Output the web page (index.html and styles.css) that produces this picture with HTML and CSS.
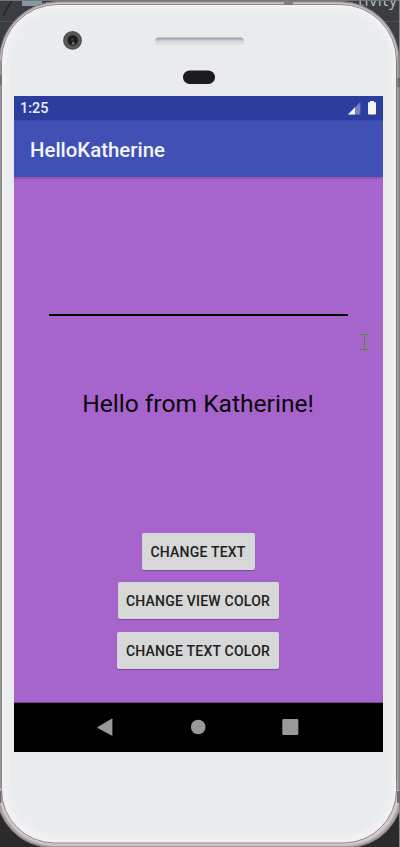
FILE: index.html
```html
<!DOCTYPE html>
<html lang="en">
<head>
<meta charset="utf-8">
<title>HelloKatherine</title>
<link rel="stylesheet" href="styles.css">
</head>
<body>
<div class="stage">
  <svg class="frame" width="400" height="847" viewBox="0 0 400 847" aria-hidden="true">
    <defs>
      <linearGradient id="slot" x1="0" y1="0" x2="0" y2="1">
        <stop offset="0" stop-color="#9a9fa9"/><stop offset=".3" stop-color="#b5bac3"/>
        <stop offset=".45" stop-color="#d4d7de"/><stop offset="1" stop-color="#e3e5e9"/>
      </linearGradient>
      <filter id="soft" x="-5%" y="-5%" width="110%" height="110%"><feGaussianBlur stdDeviation="2"/></filter>
    </defs>
    <rect width="400" height="847" fill="#2b2b2b"/>
    <rect width="400" height="90" fill="#3a3e40"/>
    <path d="M0 21.5H400" stroke="#4b4f51"/>
    <path d="M3 16L12 0" stroke="#242729" stroke-width="1.5"/>
    <rect x="22" width="20" height="6" fill="#8497a3"/>
    <text class="backdrop-text" x="358" y="6">tivity</text>
    <rect width="400" height="1" fill="#777"/>
    <path d="M-.5 60A59 58.5 0 0 1 58.5 1.5H340A59 58.5 0 0 1 399 60V790H403A55 57 0 0 1 348 847.5H52A56 57 0 0 1 -4 790H-.5Z" fill="#aaa0a3" stroke="#877f82"/>
    <path d="M.5 61A58 58 0 0 1 58.5 3H340A58 58 0 0 1 398 61V790H400A54 55 0 0 1 346 845.5H54A55 55 0 0 1 -1 790H.5Z" fill="#d3c9ce" stroke="#c6bdc1"/>
    <path d="M1.5 60.5A56 56 0 0 1 57.5 4.5H340.5A56 56 0 0 1 396.5 60.5V790A53 53 0 0 1 343.5 843H54.5A53 53 0 0 1 1.5 790Z" fill="#f1f1f4" stroke="#8f888b"/>
    <rect x="8" y="11" width="383" height="825" rx="50" fill="#e9ebed" filter="url(#soft)"/>
    <path d="M398.5 55V790" stroke="#918d8d" stroke-width="2"/>
    <path d="M396.5 60V780" stroke="#777" stroke-width="1"/>
    <path d="M399.5 0V847" stroke="#858585"/>
    <path d="M.5 60V788" stroke="#9c9397"/>
    <rect x="284" y="2" width="9" height="3" fill="#837c7f"/>
    <path d="M0 75V85M0 791V803M399 78V87M398.5 791V803" stroke="#706b6e" stroke-width="3"/>
    <circle cx="72.5" cy="40.4" r="9.4" fill="#505052"/>
    <circle cx="72.5" cy="40.4" r="7.3" fill="none" stroke="#626264"/>
    <circle cx="72.7" cy="40.4" r="5" fill="#19191c"/>
    <circle cx="72.5" cy="39.5" r="1.7" fill="#33364a"/>
    <circle cx="73.3" cy="43.3" r="1.5" fill="#77713a"/>
    <rect x="155" y="37.5" width="89" height="8" rx="3.5" fill="url(#slot)"/>
    <rect x="183" y="70.5" width="32" height="13.5" rx="6.7" fill="#1c1c20"/>
  </svg>

  <main class="screen">
    <div class="status">
      <span>1:25</span>
      <svg class="status-icons" width="29" height="14" viewBox="0 0 29 14" aria-hidden="true">
        <path d="M0 13.4L12.3 1V13.4Z" fill="#7881c1"/>
        <path d="M0 13.4L7 6.3V13.4Z" fill="#f2f2fa"/>
        <path d="M20 1.8Q20 1.2 20.7 1.2H22V0H26V1.2H27.3Q28 1.2 28 1.8V12.7Q28 13.4 27.3 13.4H20.7Q20 13.4 20 12.7Z" fill="#f2f2fa"/>
      </svg>
    </div>
    <header class="appbar"><h1>HelloKatherine</h1></header>
    <section class="content">
      <div class="field"></div>
      <p class="greeting">Hello from Katherine!</p>
      <div class="buttons">
        <button class="b-text">CHANGE TEXT</button>
        <button class="b-view">CHANGE VIEW COLOR</button>
        <button class="b-color">CHANGE TEXT COLOR</button>
      </div>
      <svg class="cursor" width="9" height="17" viewBox="0 0 9 17" aria-hidden="true">
        <path d="M0 .5H9M0 15.5H9M4.5 0V16" fill="none" stroke="#4a9128"/>
      </svg>
    </section>
    <nav class="navbar">
      <svg width="369" height="49" viewBox="0 0 369 49" aria-hidden="true">
        <g fill="#999">
          <path d="M98.4 16.2V32.2Q98.4 33 97.6 32.6L83.6 24.9Q83 24.4 83.6 23.9L97.6 15.8Q98.4 15.5 98.4 16.2Z"/>
          <circle cx="184.2" cy="24" r="7.3"/>
          <rect x="268.3" y="16" width="16" height="16" rx="1"/>
        </g>
      </svg>
    </nav>
  </main>
</div>
</body>
</html>
```
FILE: styles.css
```css
* { box-sizing: border-box; }
body {
  margin: 0;
  font-family: Roboto, "Liberation Sans", sans-serif;
  overflow: hidden;
}
.stage {
  position: relative;
  width: 400px;
  height: 847px;
  padding: 96px 17px 95px 14px;
}
.frame { position: absolute; inset: 0; }
.backdrop-text {
  font: 16px "Open Sans", sans-serif;
  letter-spacing: .7px;
  fill: #b7bcc0;
}
.screen {
  position: relative;
  display: flex;
  flex-direction: column;
  height: 656px;
  background: #000;
}
.status {
  display: flex;
  justify-content: space-between;
  align-items: center;
  height: 24px;
  padding: 0 6px;
  background: #2c3e9d;
  color: #eef0fa;
  font-size: 14.4px;
  font-weight: 500;
}
.appbar {
  display: flex;
  align-items: center;
  height: 57px;
  padding: 2px 16px 0;
  background: #4050b4;
  border-top: 1px solid #384aac;
}
h1 {
  margin: 0;
  color: #f3f4fb;
  font-size: 20.4px;
  font-weight: 500;
}
.content {
  display: flex;
  flex-direction: column;
  align-items: center;
  position: relative;
  height: 526px;
  padding-right: 1px;
  background: #a864cd;
  border-bottom: 1px solid #754390;
  box-shadow: inset 0 2px 1px #9258b5;
}
.field {
  width: 299px;
  height: 139px;
  border-bottom: 2px solid #000;
}
.greeting {
  margin: 72px 0 0;
  color: #080609;
  font-size: 24.6px;
  line-height: 32px;
  white-space: nowrap;
}
.buttons {
  display: flex;
  flex-direction: column;
  align-items: center;
  gap: 12.3px;
  margin-top: 113px;
}
button {
  height: 37px;
  padding: 1px 0 0;
  border: 0;
  border-radius: 2px;
  background: #d6d7d7;
  color: #202020;
  font: 500 14px Roboto, "Liberation Sans", sans-serif;
  letter-spacing: .22px;
  white-space: nowrap;
  box-shadow: 0 1px 1px rgba(70, 40, 90, .45);
}
.b-text { width: 113px; }
.b-view { width: 161px; }
.b-color { width: 162px; }
.cursor { position: absolute; left: 346px; top: 157px; }
.navbar { height: 49px; }
.navbar svg { display: block; }
```
